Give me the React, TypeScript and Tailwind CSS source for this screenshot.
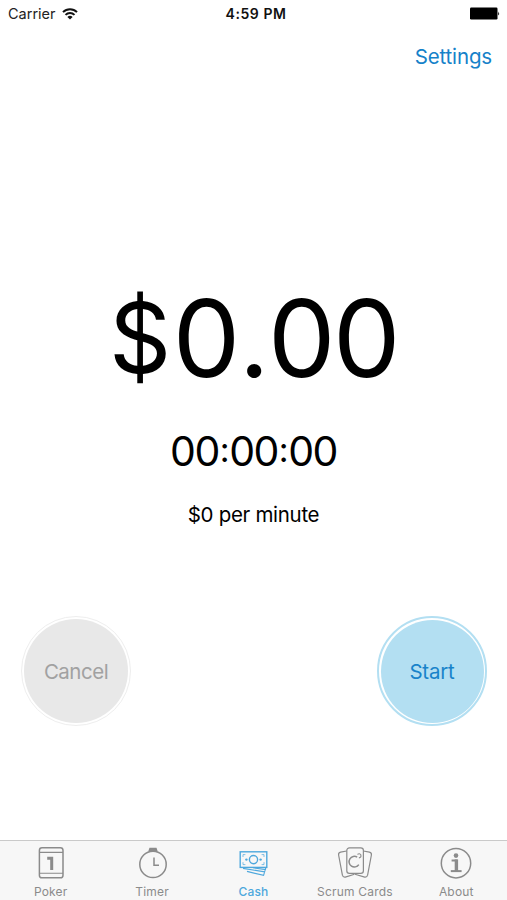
import type { ReactNode } from "react";
import { clsx } from "clsx";

const PokerIcon = () => (
  <svg width="34" height="34" viewBox="0 0 34 34" fill="none" stroke="currentColor">
    <rect x="5.4" y="1.8" width="23.6" height="30" rx="2.6" strokeWidth="1.5" />
    <path d="M5.4 6.4H29M5.4 27.2H29" strokeWidth="1.1" />
    <path d="M13.2 12.2H17.7V24" strokeWidth="3" />
  </svg>
);

const TimerIcon = () => (
  <svg width="34" height="34" viewBox="0 0 34 34" fill="none" stroke="currentColor">
    <circle cx="18" cy="18.4" r="13.2" strokeWidth="1.5" />
    <path d="M14.2 4.8L15 2.4H21L21.8 4.8Z" fill="currentColor" strokeWidth="1.4" />
    <path d="M19 11.5V19.3H24" strokeWidth="1.5" />
  </svg>
);

const CashIcon = () => (
  <svg width="34" height="34" viewBox="0 0 34 34" fill="none" stroke="currentColor">
    <rect x="4.2" y="5.8" width="26.6" height="15.6" strokeWidth="1.4" />
    <path
      d="M7 11V8.6H9.4M25.6 8.6H28V11M28 16.2V18.6H25.6M9.4 18.6H7V16.2"
      strokeWidth="0.7"
    />
    <circle cx="17.5" cy="13.6" r="4.1" strokeWidth="1.4" />
    <circle cx="10.4" cy="13.6" r="1.2" fill="currentColor" stroke="none" />
    <circle cx="24.6" cy="13.6" r="1.2" fill="currentColor" stroke="none" />
    <path d="M7 22.4L28.6 25.8L29.8 21.8M11 25.4L27.6 29.4L28.6 25.8M17 21.8L30 23.6" strokeWidth="1.1" />
  </svg>
);

const ScrumCardsIcon = () => (
  <svg width="38" height="34" viewBox="0 0 38 34" fill="none" stroke="currentColor" strokeWidth="1.2">
    <path d="M10.6 5L4.6 6.1Q2.2 6.6 2.6 9L6.4 29.2Q7 31.5 9.3 31.1L18.5 28.2" />
    <path d="M27.4 5L33.4 6.1Q35.8 6.6 35.4 9L31.6 29.2Q31 31.5 28.7 31.1L19 28.2" />
    <rect x="10.8" y="1.8" width="16.6" height="25.6" rx="2.6" />
    <path d="M21.2 11.2A5.3 5.3 0 1 0 22.8 18.6" strokeWidth="1.5" />
    <path d="M21.4 8.4Q23.6 6.8 24.8 8.8Q25.6 11.4 22.9 11.9" strokeWidth="1.1" />
  </svg>
);

const AboutIcon = () => (
  <svg width="34" height="34" viewBox="0 0 34 34" fill="none" stroke="currentColor">
    <circle cx="17" cy="17.2" r="14.7" strokeWidth="1.5" />
    <circle cx="17" cy="9.6" r="2.3" fill="currentColor" stroke="none" />
    <path d="M12.6 14.4H17.4V24.6" strokeWidth="2" />
    <path d="M17.4 13.4V25" strokeWidth="3.4" />
    <path d="M11.8 25.1H22.6" strokeWidth="2" />
  </svg>
);

const tabs: { label: string; icon: ReactNode }[] = [
  { label: "Poker", icon: <PokerIcon /> },
  { label: "Timer", icon: <TimerIcon /> },
  { label: "Cash", icon: <CashIcon /> },
  { label: "Scrum Cards", icon: <ScrumCardsIcon /> },
  { label: "About", icon: <AboutIcon /> },
];

function StatusBar() {
  return (
    <div className="grid h-[27px] grid-cols-3 items-center pl-2 pr-[7px]">
      <div className="flex items-center gap-1.5">
        <span className="text-[14.5px] text-[#222]">Carrier</span>
        <svg width="16" height="12" viewBox="0 0 16 12" fill="none" stroke="#111" strokeWidth="2">
          <path d="M1 4.1A10 10 0 0 1 15 4.1M3.5 6.9A6.4 6.4 0 0 1 12.5 6.9" />
          <path d="M8 11.6L5.4 9A3.7 3.7 0 0 1 10.6 9Z" fill="#111" stroke="none" />
        </svg>
      </div>
      <span className="pl-1 text-center text-[14px] font-semibold tracking-[0.55px] text-[#111]">
        4:59 PM
      </span>
      <svg className="justify-self-end" width="31" height="13" viewBox="0 0 31 13">
        <rect x="1" y="0.5" width="27.5" height="12" rx="1.2" />
        <path d="M29.2 4.4Q31 6.5 29.2 8.6Z" />
      </svg>
    </div>
  );
}

// Colons sit centred against the digits instead of on the baseline
const Colon = () => <span className="relative -top-1 mx-px text-[34px] leading-[40px]">:</span>;

export default function App() {
  const activeTab = "Cash";

  return (
    <div className="flex h-[900px] w-[507px] flex-col overflow-hidden bg-white font-['Inter',sans-serif] text-black">
      <StatusBar />

      <header className="flex h-[59px] items-center justify-end pr-[15px] pt-0.5">
        <button className="text-[20.5px] tracking-[-0.15px] text-[#1581c9]">Settings</button>
      </header>

      <main className="flex flex-1 flex-col items-center pt-[192px]">
        <div className="flex items-baseline text-[107px] leading-[120px] tracking-[-2.5px]">
          <span className="relative -top-1 text-[97px] leading-[100px]">$</span>
          <span className="ml-1">0</span>
          <span className="ml-px mr-px">.</span>
          <span>00</span>
        </div>
        <div className="mt-[23px] flex items-baseline text-[41px] leading-[60px] tracking-[-1.5px]">
          <span>00</span>
          <Colon />
          <span>00</span>
          <Colon />
          <span>00</span>
        </div>
        <div className="mt-[19px] text-[20.5px] leading-[30px] tracking-[-0.3px]">$0 per minute</div>

        <div className="mt-[86px] flex w-full justify-between pl-[21px] pr-[20px]">
          <button className="size-[110px] rounded-full border-[1.5px] border-[#eeeeee] bg-white p-[2px] text-[20.5px] tracking-[-0.5px] text-[#a1a1a1]">
            <span className="flex size-full items-center justify-center rounded-full bg-[#e8e8e8] pt-0.5">
              Cancel
            </span>
          </button>
          <button className="size-[110px] rounded-full border-2 border-[#b3dff2] bg-white p-[1.5px] text-[20.5px] tracking-[-0.2px] text-[#1883ca]">
            <span className="flex size-full items-center justify-center rounded-full bg-[#b3dff2] pt-0.5">
              Start
            </span>
          </button>
        </div>
      </main>

      <nav className="grid h-[60px] grid-cols-5 border-t border-[#cacaca] bg-[#f7f7f7] pt-[5px]">
        {tabs.map(({ label, icon }) => (
          <button
            key={label}
            className={clsx(
              "flex flex-col items-center",
              label === activeTab ? "font-medium text-[#4ea8dd]" : "text-[#8b8b8b]"
            )}
          >
            {icon}
            <span className="mt-1 text-[12px] leading-4 tracking-[0.2px]">{label}</span>
          </button>
        ))}
      </nav>
    </div>
  );
}
